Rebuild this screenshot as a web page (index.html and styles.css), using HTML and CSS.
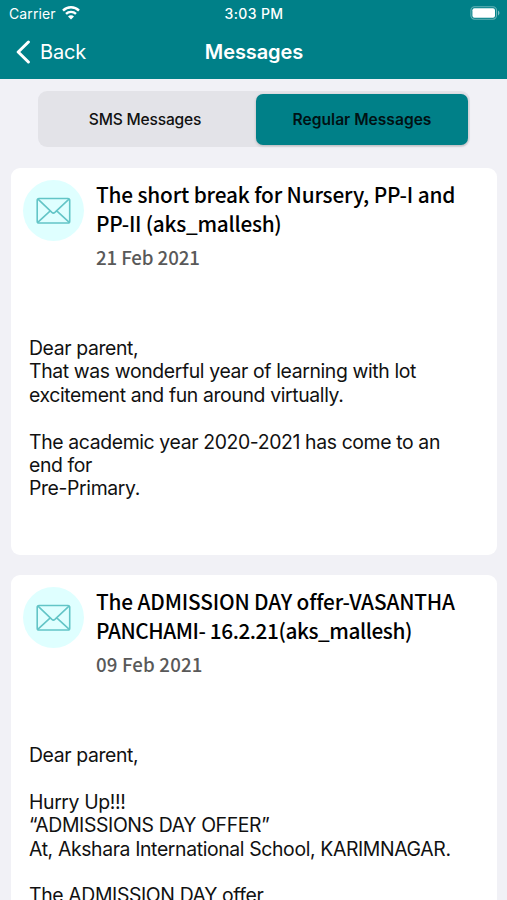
FILE: index.html
```html
<!DOCTYPE html>
<html lang="en">
<head>
    <meta charset="UTF-8">
    <meta name="viewport" content="width=device-width, initial-scale=1.0">
    <title>Messages</title>
    <link rel="stylesheet" href="styles.css">
</head>
<body>
    <header class="header">
        <div class="status-bar">
            <div class="carrier">
                <span>Carrier</span>
                <svg class="wifi" viewBox="0 0 18 14" width="18" height="14">
                    <path d="M1 4.6a11.3 11.3 0 0 1 16 0M4 7.9a7.1 7.1 0 0 1 10 0" fill="none" stroke="#fff" stroke-width="2.4"/>
                    <path d="M6 10.4a4.2 4.2 0 0 1 6 0L9 13.5z" fill="#fff"/>
                </svg>
            </div>
            <div class="time">3:03 PM</div>
            <svg class="battery" viewBox="0 0 30 14" width="30" height="14">
                <rect x="0.9" y="0.8" width="25.6" height="12.4" rx="3.6" fill="none" stroke="#fff" stroke-opacity=".4" stroke-width="1.1"/>
                <rect x="2.4" y="2.3" width="22.6" height="9.4" rx="2" fill="#fff"/>
                <path d="M28 4.6c1.9.8 1.9 4 0 4.8z" fill="#fff" fill-opacity=".5"/>
            </svg>
        </div>
        <nav class="nav-bar">
            <a class="back">
                <svg viewBox="0 0 16 24" width="16" height="24">
                    <path d="M13.4 2L3.2 12l10.2 10" fill="none" stroke="#fff" stroke-width="3" stroke-linecap="round" stroke-linejoin="round"/>
                </svg>
                <span>Back</span>
            </a>
            <h1>Messages</h1>
        </nav>
    </header>

    <div class="segments">
        <button type="button" class="segment">SMS Messages</button>
        <button type="button" class="segment active">Regular Messages</button>
    </div>

    <main class="messages">
        <article class="card">
            <div class="card-head">
                <div class="avatar">
                    <svg viewBox="0 0 36 28" width="36" height="28" fill="none" stroke="#63c5c7" stroke-width="1.6" stroke-linejoin="round">
                        <rect x="1.2" y="1.5" width="32.5" height="24.5" rx="1.8"/>
                        <path d="M2 2.2l13.9 13.2q1.5 1.3 3 0L33 2.2M2 25.2l12-11M33 25.2l-12-11"/>
                    </svg>
                </div>
                <div>
                    <h2>The short break for Nursery, PP-I and<br><span class="tight">PP-II (aks_mallesh)</span></h2>
                    <div class="date">21 Feb 2021</div>
                </div>
            </div>
            <div class="card-body">
                <p>Dear parent,<br>That was wonderful year of learning with lot<br>excitement and fun around virtually.</p>
                <p>The academic year 2020-2021 has come to an<br>end for<br>Pre-Primary.</p>
            </div>
        </article>

        <article class="card">
            <div class="card-head">
                <div class="avatar">
                    <svg viewBox="0 0 36 28" width="36" height="28" fill="none" stroke="#63c5c7" stroke-width="1.6" stroke-linejoin="round">
                        <rect x="1.2" y="1.5" width="32.5" height="24.5" rx="1.8"/>
                        <path d="M2 2.2l13.9 13.2q1.5 1.3 3 0L33 2.2M2 25.2l12-11M33 25.2l-12-11"/>
                    </svg>
                </div>
                <div>
                    <h2>The ADMISSION DAY offer-VASANTHA<br><span class="tighter">PANCHAMI- 16.2.21(aks_mallesh)</span></h2>
                    <div class="date wide">09 Feb 2021</div>
                </div>
            </div>
            <div class="card-body">
                <p>Dear parent,</p>
                <p>Hurry Up!!!<br>“ADMISSIONS DAY OFFER”<br>At, Akshara International School, KARIMNAGAR.</p>
                <p>The ADMISSION DAY offer</p>
            </div>
        </article>
    </main>
</body>
</html>
```
FILE: styles.css
```css
:root {
    --teal: #008088;
    --page-bg: #f1f1f6;
    --segment-bg: #e3e3e8;
    --icon-bg: #dfffff;
    --text-date: #595959;
}

* { box-sizing: border-box; }

body {
    margin: 0;
    height: 900px;
    overflow: hidden;
    background-color: var(--page-bg);
    color: #000;
    font-family: 'Inter', 'Liberation Sans', sans-serif;
}

/* Header */
.header {
    height: 79px;
    background-color: var(--teal);
    color: #fff;
}
.status-bar {
    display: grid;
    grid-template-columns: 1fr auto 1fr;
    align-items: center;
    height: 26px;
    padding: 0 7px 0 9px;
    font-size: 14px;
}
.carrier { display: flex; align-items: center; gap: 6px; letter-spacing: 0.1px; }
.time { margin-right: 1px; font-weight: 500; letter-spacing: 0.35px; }
.battery { justify-self: end; }

.nav-bar {
    display: grid;
    grid-template-columns: 1fr auto 1fr;
    align-items: center;
    height: 52px;
    padding: 0 14px 0 15px;
}
.back { display: flex; align-items: center; gap: 9px; font-size: 20px; letter-spacing: -0.2px; }
.nav-bar h1 { margin: 0; font-size: 20px; font-weight: 600; letter-spacing: -0.1px; }

/* Tabs */
.segments {
    display: flex;
    width: 432px;
    height: 56px;
    margin: 12px 0 21px 38px;
    padding: 3px 2px 2px;
    border-radius: 9px;
    background-color: var(--segment-bg);
}
.segment {
    flex: 1;
    padding: 0 6px 0 0;
    border: none;
    border-radius: 7px;
    background: none;
    color: #111;
    font-family: inherit;
    font-size: 15.6px;
    font-weight: 500;
    letter-spacing: -0.2px;
}
.segment.active {
    flex: 0 0 212px;
    padding: 0;
    background-color: var(--teal);
    color: #001214;
    font-weight: 600;
    letter-spacing: 0;
    box-shadow: 0 1px 3px rgba(0, 0, 0, 0.2);
}

/* Message cards */
.messages {
    display: flex;
    flex-direction: column;
    gap: 20px;
    padding: 0 10px 0 11px;
}
.card {
    height: 387px;
    flex: none;
    padding: 12px 12px 0;
    border-radius: 9px;
    background-color: #fff;
}
.card-head { display: flex; gap: 12px; height: 157px; }
.avatar {
    display: flex;
    align-items: center;
    justify-content: center;
    flex: none;
    width: 61px;
    height: 61px;
    border-radius: 50%;
    background-color: var(--icon-bg);
}
.card h2, .date {
    margin: 0;
    font-family: 'Noto Sans CJK SC', 'Noto Sans', sans-serif;
    font-size: 20.8px;
    font-weight: 500;
    line-height: 29px;
    letter-spacing: -0.15px;
    white-space: nowrap;
}
.card .tight { letter-spacing: -0.25px; }
.card .tighter { letter-spacing: -0.43px; }
.card .date { margin-top: 4px; color: var(--text-date); font-size: 18.7px; letter-spacing: -0.1px; }
.card .date.wide { letter-spacing: 0.15px; }

.card-body {
    padding-left: 6px;
    color: #111;
    font-size: 19.4px;
    line-height: 23.4px;
    letter-spacing: -0.37px;
    white-space: nowrap;
}
.card-body p { margin: 0 0 23.4px; }

/* The second card runs to the end of the screen */
.card:last-child { height: 325px; overflow: hidden; border-radius: 9px 9px 0 0; }
```
